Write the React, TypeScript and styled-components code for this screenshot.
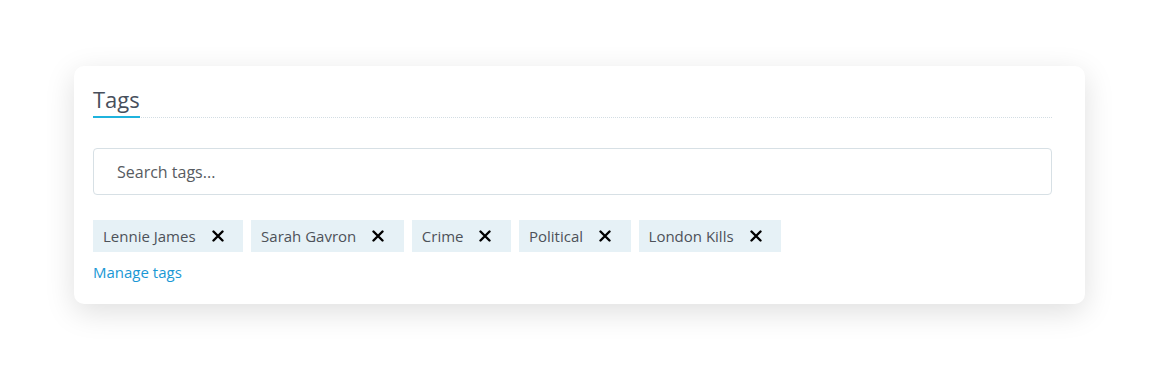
import React from "react";
import styled, { createGlobalStyle } from "styled-components";

const GlobalStyle = createGlobalStyle`
  html, body {
    margin: 0;
    background: #ffffff;
    font-family: "Open Sans", "Noto Sans", sans-serif;
  }
`;

const Page = styled.div`
  min-height: 100vh;
  box-sizing: border-box;
  padding: 66px 73px 0 74px;
`;

const Card = styled.section`
  background: #ffffff;
  border-radius: 10px;
  box-shadow: 0 8px 30px rgba(0, 0, 0, 0.13);
  padding: 16px 33px 21px 19px;
`;

const Heading = styled.div`
  border-bottom: 1px dotted #d3dde3;
  display: flex;
`;

const Title = styled.h2`
  margin: 0 0 -1px;
  font-size: 22px;
  font-weight: 400;
  line-height: 34px;
  color: #474f5c;
  border-bottom: 2px solid #1fb3dd;
`;

const Search = styled.input`
  display: block;
  box-sizing: border-box;
  width: 100%;
  height: 47px;
  margin-top: 30px;
  padding: 0 23px;
  border: 1px solid #d7e0e5;
  border-radius: 4px;
  font-family: inherit;
  font-size: 16px;
  color: #333;
  outline: none;
  &::placeholder {
    color: #575b61;
  }
`;

const TagList = styled.div`
  display: flex;
  gap: 8px;
  margin-top: 25px;
`;

const Tag = styled.span`
  display: inline-flex;
  align-items: center;
  height: 32px;
  padding: 0 19.5px 0 10px;
  background: #e6f1f6;
  font-size: 15px;
  color: #4d5259;
`;

const Remove = styled.button`
  display: flex;
  align-items: center;
  border: 0;
  background: none;
  padding: 0;
  margin-left: 16px;
  cursor: pointer;
`;

const ManageLink = styled.a`
  display: inline-block;
  margin-top: 10px;
  font-size: 15px;
  color: #1a98d5;
  text-decoration: none;
`;

const tags = ["Lennie James", "Sarah Gavron", "Crime", "Political", "London Kills"];

const CloseIcon = () => (
  <svg width="12" height="12" viewBox="0 0 12 12">
    <path d="M1.5 1.5 L10.5 10.5 M10.5 1.5 L1.5 10.5" stroke="#000" strokeWidth="2.4" strokeLinecap="round" />
  </svg>
);

const App: React.FC = () => {
  return (
    <Page>
      <GlobalStyle />
      <Card>
        <Heading>
          <Title>Tags</Title>
        </Heading>
        <Search placeholder="Search tags..." />
        <TagList>
          {tags.map((t) => (
            <Tag key={t}>
              {t}
              <Remove aria-label={`Remove ${t}`}>
                <CloseIcon />
              </Remove>
            </Tag>
          ))}
        </TagList>
        <ManageLink href="#">Manage tags</ManageLink>
      </Card>
    </Page>
  );
};

export default App;
